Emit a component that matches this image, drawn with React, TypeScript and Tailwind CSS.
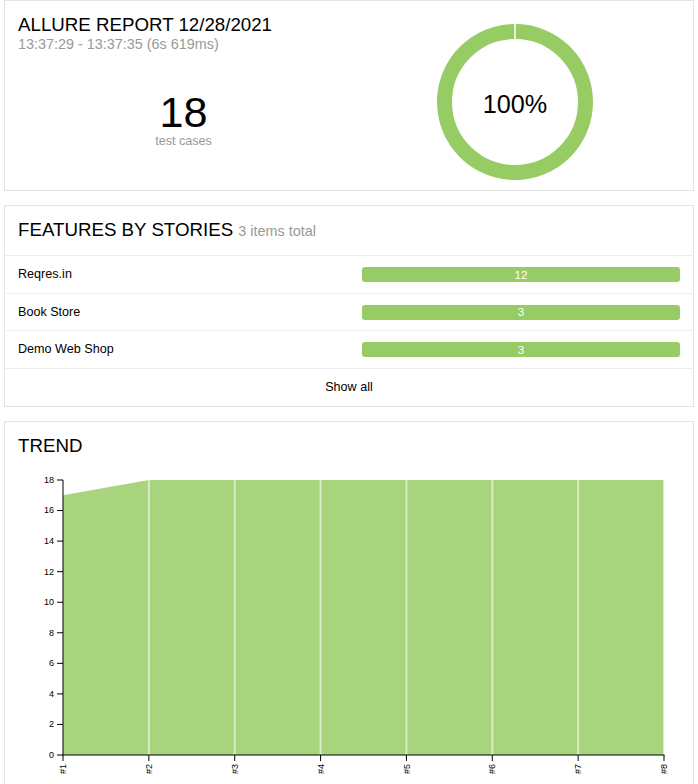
import React from 'react';

// цвета Allure
const PASSED = '#97cc64';
const AREA = '#a9d47e';

const features = [
    { name: 'Reqres.in', count: 12, h: 'h-[38px]' },
    { name: 'Book Store', count: 3, h: 'h-[37px]' },
    { name: 'Demo Web Shop', count: 3, h: 'h-[38px]' },
];

const trend = [17, 18, 18, 18, 18, 18, 18, 18];

const Donut = () => (
    <svg width="160" height="160" viewBox="0 0 160 160" className="mt-[7.5px]">
        <circle cx="80" cy="80" r="70.5" fill="none" stroke={PASSED} strokeWidth="15" />
        <line x1="80" y1="0" x2="80" y2="20" stroke="#fff" strokeWidth="1.5" />
        <text x="80" y="90.5" textAnchor="middle" fontSize="25.2" fill="#000" fontFamily="'Liberation Sans', Arial, sans-serif">
            100%
        </text>
    </svg>
);

const SummaryCard = () => (
    <div className="h-[191px] border border-[#e4e4e4] bg-white flex px-[13px] pt-[13px]">
        <div className="w-1/2">
            <h2 className="text-[18.72px] leading-[21.5px] font-normal">ALLURE REPORT 12/28/2021</h2>
            <div className="text-[14.4px] leading-[16.5px] text-[#999]">13:37:29 - 13:37:35 (6s 619ms)</div>
            <div className="mt-[39.2px] text-center">
                <div className="text-[43.2px] leading-[43.2px]">18</div>
                <div className="text-[12.6px] leading-[14.5px] text-[#999]">test cases</div>
            </div>
        </div>
        <div className="w-1/2 flex justify-center items-start">
            <Donut />
        </div>
    </div>
);

const FeaturesCard = () => (
    <div className="mt-[14px] border border-[#e4e4e4] bg-white">
        <div className="h-[50px] px-[13px] pt-[13px] border-b border-[#eee]">
            <h2 className="text-[18.72px] leading-[21.5px] font-normal">
                FEATURES BY STORIES <span className="text-[14.4px] text-[#999]">3 items total</span>
            </h2>
        </div>
        {features.map(f => (
            <div key={f.name} className={`${f.h} flex items-center justify-between px-[13px] border-b border-[#eee] text-[12.6px]`}>
                <span>{f.name}</span>
                <div className="w-[318px] h-[15px] rounded-[3px] bg-[#97cc64] flex items-center justify-center text-white text-[11.7px] leading-none">
                    {f.count}
                </div>
            </div>
        ))}
        <div className="h-[37px] flex items-center justify-center text-[12.6px]">Show all</div>
    </div>
);

const TrendChart = () => {
    const x0 = 58;
    const step = (659 - 58) / 7;
    const yBase = 284;
    const yTop = 9;
    const k = (yBase - yTop) / 18;
    const xs = trend.map((_, i) => x0 + i * step);
    const ys = trend.map(v => yBase - v * k);
    const area = `M${xs[0]},${yBase} ` + xs.map((x, i) => `L${x},${ys[i]}`).join(' ') + ` L${xs[xs.length - 1]},${yBase} Z`;
    const ticks = [0, 2, 4, 6, 8, 10, 12, 14, 16, 18];

    return (
        <svg width="688" height="320" fontFamily="'Liberation Sans', Arial, sans-serif">
            <path d={area} fill={AREA} />
            {xs.slice(1).map((x, i) => (
                <line key={i} x1={x} y1={ys[i + 1]} x2={x} y2={yBase} stroke="#fff" strokeOpacity="0.55" strokeWidth="2" />
            ))}
            {/* ось Y */}
            <line x1={x0} y1={yTop} x2={x0} y2={yBase + 0.5} stroke="#000" strokeWidth="1" />
            {ticks.map(t => (
                <g key={t}>
                    <line x1={x0 - 6} y1={yBase - t * k} x2={x0} y2={yBase - t * k} stroke="#000" />
                    <text x={x0 - 9} y={yBase - t * k} dy="0.32em" textAnchor="end" fontSize="9" fill="#000">{t}</text>
                </g>
            ))}
            {/* ось X */}
            <line x1={x0} y1={yBase} x2={xs[7] + 0.5} y2={yBase} stroke="#000" />
            {xs.map((x, i) => (
                <g key={i}>
                    <line x1={x} y1={yBase} x2={x} y2={yBase + 6} stroke="#000" />
                    <text transform={`translate(${x},${yBase + 9}) rotate(-90)`} dy="0.35em" textAnchor="end" fontSize="9" fill="#000">
                        #{i + 1}
                    </text>
                </g>
            ))}
        </svg>
    );
};

const TrendCard = () => (
    <div className="mt-[14px] border border-[#e4e4e4] bg-white">
        <div className="h-[49px] px-[13px] pt-[13px]">
            <h2 className="text-[18.72px] leading-[21.5px] font-normal">TREND</h2>
        </div>
        <TrendChart />
    </div>
);

const App = () => (
    <div className="min-h-screen bg-white px-1 text-black font-['Liberation_Sans',Arial,sans-serif]">
        <SummaryCard />
        <FeaturesCard />
        <TrendCard />
    </div>
);

export default App;
